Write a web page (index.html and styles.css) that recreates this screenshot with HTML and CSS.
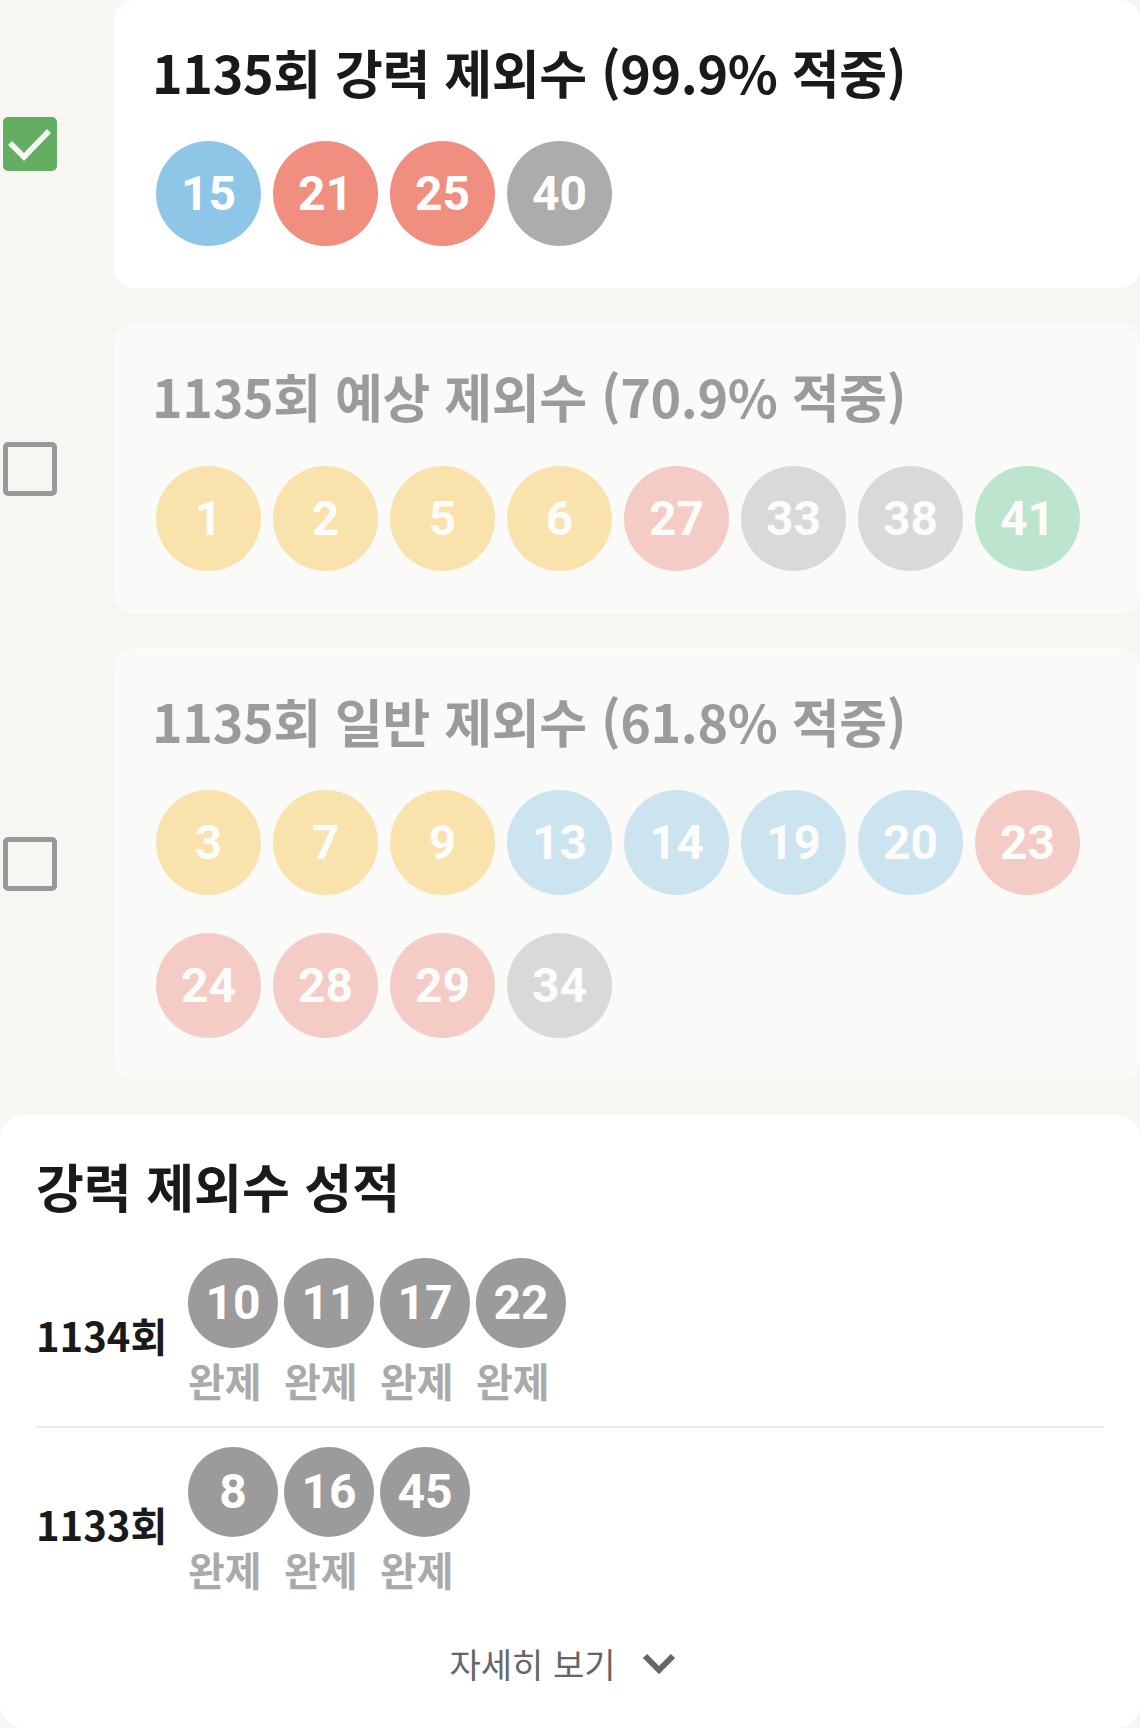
FILE: index.html
```html
<!DOCTYPE html>
<html lang="ko">
<head>
  <meta charset="UTF-8">
  <title>제외수</title>
  <meta name="viewport" content="width=device-width, initial-scale=1.0">
  <link rel="stylesheet" href="styles.css">
</head>
<body>

<!-- 제외수 선택 목록 -->
<div class="pick-list">
  <div class="pick-row">
    <span class="check on">
      <svg viewBox="0 0 54 54" width="54" height="54"><polyline points="7,26 21,40 46,14" fill="none" stroke="#f6f6f2" stroke-width="5.5"/></svg>
    </span>
    <div class="pick-card">
      <h2 class="pick-title">1135회 강력 제외수 (99.9% 적중)</h2>
      <div class="balls">
        <span class="ball b">15</span>
        <span class="ball r">21</span>
        <span class="ball r">25</span>
        <span class="ball g">40</span>
      </div>
    </div>
  </div>

  <div class="pick-row">
    <span class="check off"></span>
    <div class="pick-card dim">
      <h2 class="pick-title">1135회 예상 제외수 (70.9% 적중)</h2>
      <div class="balls">
        <span class="ball y">1</span>
        <span class="ball y">2</span>
        <span class="ball y">5</span>
        <span class="ball y">6</span>
        <span class="ball r">27</span>
        <span class="ball g">33</span>
        <span class="ball g">38</span>
        <span class="ball gr">41</span>
      </div>
    </div>
  </div>

  <div class="pick-row">
    <span class="check off"></span>
    <div class="pick-card dim">
      <h2 class="pick-title">1135회 일반 제외수 (61.8% 적중)</h2>
      <div class="balls">
        <span class="ball y">3</span>
        <span class="ball y">7</span>
        <span class="ball y">9</span>
        <span class="ball b">13</span>
        <span class="ball b">14</span>
        <span class="ball b">19</span>
        <span class="ball b">20</span>
        <span class="ball r">23</span>
        <span class="ball r">24</span>
        <span class="ball r">28</span>
        <span class="ball r">29</span>
        <span class="ball g">34</span>
      </div>
    </div>
  </div>
</div>

<!-- 강력 제외수 성적 -->
<div class="record">
  <h2 class="record-title">강력 제외수 성적</h2>

  <div class="round-row">
    <div class="round-no">1134회</div>
    <div class="round-balls">
      <div class="hit"><span class="mini-ball">10</span><span class="hit-label">완제</span></div>
      <div class="hit"><span class="mini-ball">11</span><span class="hit-label">완제</span></div>
      <div class="hit"><span class="mini-ball">17</span><span class="hit-label">완제</span></div>
      <div class="hit"><span class="mini-ball">22</span><span class="hit-label">완제</span></div>
    </div>
  </div>

  <div class="round-row">
    <div class="round-no">1133회</div>
    <div class="round-balls">
      <div class="hit"><span class="mini-ball">8</span><span class="hit-label">완제</span></div>
      <div class="hit"><span class="mini-ball">16</span><span class="hit-label">완제</span></div>
      <div class="hit"><span class="mini-ball">45</span><span class="hit-label">완제</span></div>
    </div>
  </div>

  <button class="btn-more">자세히 보기
    <svg viewBox="0 0 34 22" width="34" height="22"><polyline points="3,4 17,18 31,4" fill="none" stroke="#666" stroke-width="6"/></svg>
  </button>
</div>

</body>
</html>
```

FILE: styles.css
```css
body {
  margin: 0;
  background: #f7f6f2;
  font-family: "Noto Sans CJK KR", "Noto Sans", sans-serif;
  color: #1a1a1a;
}
.pick-list {
  display: flex;
  flex-direction: column;
  gap: 36px;
}
.pick-row {
  display: flex;
  align-items: center;
}
.check {
  flex: none;
  width: 54px;
  height: 54px;
  box-sizing: border-box;
  margin-left: 3px;
  margin-right: 57px;
  border-radius: 5px;
}
.check svg { display: block; }
.check.on { background: #63ae62; }
.check.off { border: 5px solid #999; }

.pick-card {
  flex: 1;
  background: #fff;
  border-radius: 20px;
  padding: 41px 40px 42px 42px;
}
.pick-card.dim { background: #fafaf8; }
.pick-card.dim > * { opacity: 0.42; }
.pick-title {
  margin: 0 0 38px -4px;
  font-size: 52px;
  line-height: 1.2;
  font-weight: 700;
  letter-spacing: -0.35px;
}
.balls {
  display: flex;
  flex-wrap: wrap;
  gap: 38px 12px;
}
.ball {
  width: 105px;
  height: 105px;
  border-radius: 50%;
  display: flex;
  align-items: center;
  justify-content: center;
  font-family: Roboto, sans-serif;
  font-weight: 700;
  font-size: 48px;
  color: #fff;
}
.ball.y { background: #f8c243; }
.ball.b { background: #8dc6e6; }
.ball.r { background: #f08e80; }
.ball.g { background: #acacac; }
.ball.gr { background: #69c896; }

/* 성적 */
.record {
  margin-top: 35px;
  background: #fff;
  border-radius: 24px;
  padding: 40px 36px 44px;
}
.record-title {
  margin: 0 0 20px;
  font-size: 52px;
  line-height: 1.2;
  font-weight: 700;
}
.round-row {
  display: flex;
  align-items: center;
  padding: 20px 0 22px;
}
.round-row + .round-row { border-top: 2px solid #ececec; padding-top: 19px; }
.round-no {
  width: 152px;
  flex: none;
  font-size: 40px;
  line-height: 1.2;
  font-weight: 700;
  padding-top: 9px;
}
.round-balls {
  display: flex;
  gap: 6px;
}
.hit {
  display: flex;
  flex-direction: column;
  align-items: flex-start;
  width: 90px;
}
.mini-ball {
  width: 90px;
  height: 90px;
  border-radius: 50%;
  background: #9b9b9b;
  color: #fff;
  display: flex;
  align-items: center;
  justify-content: center;
  font-family: Roboto, sans-serif;
  font-weight: 700;
  font-size: 48px;
}
.hit-label {
  margin-top: 8px;
  font-size: 40px;
  line-height: 1.2;
  font-weight: 700;
  color: #aaa;
}
.btn-more {
  display: flex;
  align-items: center;
  justify-content: center;
  gap: 27px;
  width: 100%;
  margin-top: 29px;
  padding: 0 14px 0 0;
  border: none;
  background: none;
  font-family: inherit;
  font-size: 34px;
  line-height: 1.2;
  color: #666;
}
.btn-more svg { display: block; margin-top: -2px; }
```
